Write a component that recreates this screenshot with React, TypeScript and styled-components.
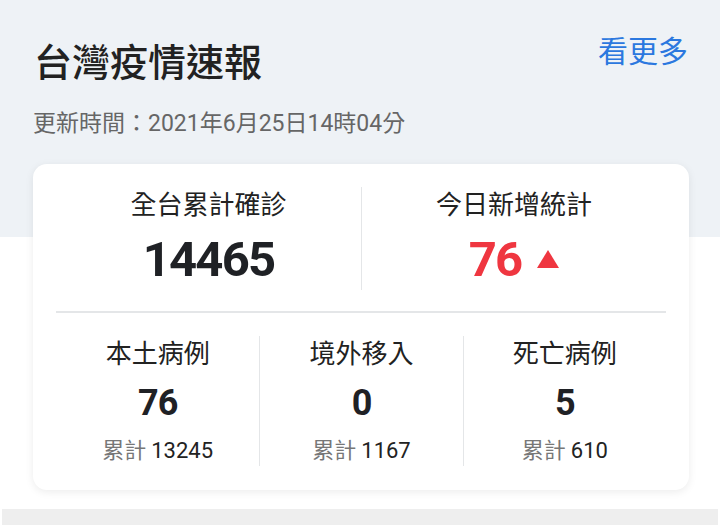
import React from "react";
import styled, { createGlobalStyle } from "styled-components";

const Global = createGlobalStyle`
  html, body { margin: 0; padding: 0; background: #fff; }
  body { font-family: Roboto, "Noto Sans CJK TC", "Noto Sans", sans-serif; }
  * { box-sizing: border-box; }
`;

const Page = styled.div`
  width: 720px;
  height: 525px;
  overflow: hidden;
  background: linear-gradient(#eef2f6 0, #eef2f6 237px, #ffffff 237px);
  display: flex;
  flex-direction: column;
`;

const Header = styled.div`
  padding: 38px 32px 0 34px;
  display: flex;
  justify-content: space-between;
  align-items: flex-start;
`;

const Title = styled.h1`
  margin: 0;
  font-size: 38px;
  line-height: 50px;
  font-weight: 500;
  color: #222;
`;

const MoreLink = styled.a`
  font-size: 30px;
  line-height: 30px;
  margin-top: -1px;
  color: #2b78df;
  text-decoration: none;
  cursor: pointer;
`;

const Updated = styled.div`
  margin: 21px 0 0 33px;
  font-size: 23px;
  line-height: 30px;
  color: #666;
`;

const Card = styled.div`
  margin: 25px 31px 0 33px;
  background: #fff;
  border-radius: 14px;
  box-shadow: 0 2px 9px rgba(0, 0, 0, 0.08);
  padding: 23px 23px 24px;
`;

const TopRow = styled.div`
  display: grid;
  grid-template-columns: 1fr 1fr;
`;

const BottomRow = styled.div`
  display: grid;
  grid-template-columns: 1fr 1fr 1fr;
`;

const Cell = styled.div<{ $divider?: boolean }>`
  display: flex;
  flex-direction: column;
  align-items: center;
  border-left: ${(p) => (p.$divider ? "1.5px solid #e4e6e8" : "none")};
`;

const Label = styled.div`
  font-size: 26px;
  line-height: 36px;
  color: #222;
`;

const BigNum = styled.div<{ $red?: boolean }>`
  margin-top: 7px;
  font-size: 49px;
  line-height: 60px;
  font-weight: 700;
  letter-spacing: -1.8px;
  color: ${(p) => (p.$red ? "#ef3640" : "#1f2125")};
  display: flex;
  align-items: center;
  gap: 16px;
`;

const Triangle = styled.span`
  width: 0;
  height: 0;
  border-left: 11px solid transparent;
  border-right: 11px solid transparent;
  border-bottom: 18px solid #ef3640;
  margin-top: -3px;
`;

const HLine = styled.div`
  height: 1.5px;
  background: #e4e6e8;
  margin: 21px 0 23px;
`;

const MidNum = styled.div`
  margin-top: 9px;
  font-size: 36px;
  line-height: 44px;
  font-weight: 700;
  letter-spacing: -1px;
  color: #1f2125;
`;

const Sub = styled.div`
  margin-top: 11px;
  font-size: 22px;
  line-height: 30px;
  color: #222;
  display: flex;
  gap: 5px;
`;

const SubLabel = styled.span`
  color: #777;
`;

const Band = styled.div`
  margin: 19px 2px 0 2px;
  flex: 1;
  background: #eeeeee;
`;

const stats = [
  { label: "本土病例", value: "76", total: "13245" },
  { label: "境外移入", value: "0", total: "1167" },
  { label: "死亡病例", value: "5", total: "610" },
];

export default function App() {
  return (
    <Page>
      <Global />
      <Header>
        <Title>台灣疫情速報</Title>
        <MoreLink>看更多</MoreLink>
      </Header>
      <Updated>更新時間：2021年6月25日14時04分</Updated>
      <Card>
        <TopRow>
          <Cell>
            <Label>全台累計確診</Label>
            <BigNum>14465</BigNum>
          </Cell>
          <Cell $divider>
            <Label>今日新增統計</Label>
            <BigNum $red>
              76
              <Triangle />
            </BigNum>
          </Cell>
        </TopRow>
        <HLine />
        <BottomRow>
          {stats.map((s, i) => (
            <Cell key={s.label} $divider={i > 0}>
              <Label>{s.label}</Label>
              <MidNum>{s.value}</MidNum>
              <Sub>
                <SubLabel>累計</SubLabel>
                {s.total}
              </Sub>
            </Cell>
          ))}
        </BottomRow>
      </Card>
      <Band />
    </Page>
  );
}
